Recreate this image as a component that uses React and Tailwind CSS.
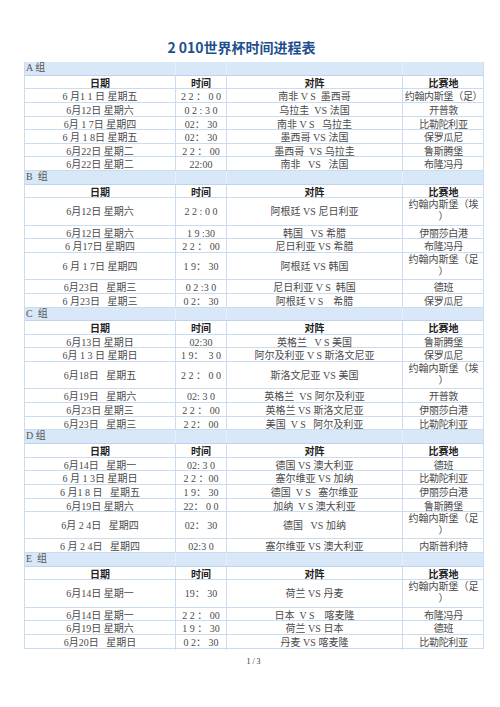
const groups = [
  {
    name: "A 组",
    rows: [
      ["6 月1 1 日 星期五", "2 2 ： 0 0", "南非 V S  墨西哥", "约翰内斯堡（足）"],
      ["6月12日 星期六", "0 2 : 3 0", "乌拉圭  VS 法国", "开普敦"],
      ["6月 1 7日 星期四", "02： 30", "南非 V S   乌拉圭", "比勒陀利亚"],
      ["6 月 1 8日 星期五", "02： 30", "墨西哥 VS 法国", "保罗瓜尼"],
      ["6月22日 星期二", "2 2 ： 00", "墨西哥  VS 乌拉圭", "鲁斯腾堡"],
      ["6月22日 星期二", "22:00", "南非   VS   法国", "布隆冯丹"],
    ],
  },
  {
    name: "B  组",
    rows: [
      ["6月12日 星期六", "2 2 : 0 0", "阿根廷 VS 尼日利亚", "约翰内斯堡（埃", true],
      ["6月12日 星期六", "1 9 :30", "韩国   VS 希腊", "伊丽莎白港"],
      ["6 月17日 星期四", "2 2 ： 00", "尼日利亚 VS 希腊", "布隆冯丹"],
      ["6 月 1 7日 星期四", "1 9： 30", "阿根廷 VS 韩国", "约翰内斯堡（足", true],
      ["6月23日   星期三", "0 2 :3 0", "尼日利亚 V S  韩国", "德班"],
      ["6 月23日   星期三", "0 2： 30", "阿根廷 V S    希腊", "保罗瓜尼"],
    ],
  },
  {
    name: "C  组",
    rows: [
      ["6月13日 星期日", "02:30", "英格兰   V S 美国", "鲁斯腾堡"],
      ["6月 1 3 日 星期日", "1 9：  3 0", "阿尔及利亚 V S 斯洛文尼亚", "保罗瓜尼"],
      ["6月18日   星期五", "2 2 ： 0 0", "斯洛文尼亚 VS 美国", "约翰内斯堡（埃", true],
      ["6月19日   星期六", "02: 3 0", "英格兰  VS 阿尔及利亚", "开普敦"],
      ["6月23日 星期三", "2 2 ： 00", "英格兰 VS 斯洛文尼亚", "伊丽莎白港"],
      ["6月23日   星期三", "2 2： 00", "美国  V S   阿尔及利亚", "比勒陀利亚"],
    ],
  },
  {
    name: "D 组",
    rows: [
      ["6月14日   星期一", "02: 3 0", "德国 VS 澳大利亚", "德班"],
      ["6 月 1 3日 星期日", "2 2 ：00", "塞尔维亚 VS 加纳", "比勒陀利亚"],
      ["6 月1 8 日   星期五", "1 9： 30", "德国  V S   塞尔维亚", "伊丽莎白港"],
      ["6月19日 星期六", "22： 0 0", "加纳  V S 澳大利亚", "鲁斯腾堡"],
      ["6月 2 4日   星期四", "02： 30", "德国   VS 加纳", "约翰内斯堡（足", true],
      ["6 月 2 4日   星期四", "02:3 0", "塞尔维亚 VS 澳大利亚", "内斯普利特"],
    ],
  },
  {
    name: "E  组",
    rows: [
      ["6月14日 星期一", "19： 30", "荷兰 VS 丹麦", "约翰内斯堡（足", true],
      ["6月14日 星期一", "2 2 ： 00", "日本  V S    喀麦隆", "布隆冯丹"],
      ["6月19日 星期六", "1 9 ： 30", "荷兰 VS 日本", "德班"],
      ["6月20日   星期日", "0 2： 30", "丹麦 VS 喀麦隆", "比勒陀利亚"],
    ],
  },
];

const cols = "grid grid-cols-[151px_51px_176px_81px]";
const serif = "font-['Liberation_Serif','Noto_Sans_CJK_SC',serif]";
const sans = "font-['Noto_Sans_CJK_SC','Liberation_Sans',sans-serif]";

function Band({ name }) {
  return (
    <div className={`${cols} h-[13.65px] bg-[#d8e8f8] border-b border-[#bcd4ee]`}>
      <div className={`${serif} text-[10px] leading-[11px] text-[#555] pl-[1px] whitespace-pre border-r border-[#e6f0fa]`}>
        {name}
      </div>
      <div className="border-r border-[#e6f0fa]" />
      <div className="border-r border-[#e6f0fa]" />
      <div />
    </div>
  );
}

function Header() {
  const heads = ["日期", "时间", "对阵", "比赛地"];
  return (
    <div className={`${cols} h-[13.65px] border-b border-[#c9dcf0]`}>
      {heads.map((h, i) => (
        <div
          key={h}
          className={`${sans} font-bold text-[10px] leading-[13px] text-[#222] text-center ${i < 3 ? "border-r border-[#c9dcf0]" : ""}`}
        >
          {h}
        </div>
      ))}
    </div>
  );
}

function Row({ row }) {
  const [date, time, match, venue, tall] = row;
  const cell = `${serif} text-[10px] text-[#4a4a4a] whitespace-pre flex items-center justify-center`;
  return (
    <div className={`${cols} ${tall ? "h-[27.3px]" : "h-[13.65px]"} border-b border-[#c9dcf0]`}>
      <div className={`${cell} border-r border-[#c9dcf0]`}>{date}</div>
      <div className={`${cell} border-r border-[#c9dcf0]`}>{time}</div>
      <div className={`${cell} border-r border-[#c9dcf0]`}>{match}</div>
      {tall ? (
        <div className={`${serif} text-[10px] leading-[12px] text-[#4a4a4a] text-center pt-[1px]`}>
          <div className="whitespace-nowrap">{venue}</div>
          <div>）</div>
        </div>
      ) : (
        <div className={`${cell} tracking-[-0.3px]`}>{venue}</div>
      )}
    </div>
  );
}

export default function App() {
  return (
    <div className="w-[500px] h-[707px] bg-white overflow-hidden">
      <div className="h-[62px] flex items-end justify-center pr-[17px] pb-[6px]">
        <h1 className={`${sans} text-[14px] leading-[18px] font-semibold text-[#1f4f8f]`}>
          2 010世界杯时间进程表
        </h1>
      </div>
      <div className="ml-[24px] w-[460px] border-l border-r border-[#c9dcf0]">
        {groups.map((g) => (
          <div key={g.name}>
            <Band name={g.name} />
            <Header />
            {g.rows.map((r, i) => (
              <Row key={i} row={r} />
            ))}
          </div>
        ))}
      </div>
      <div className={`${serif} text-[8px] text-[#333] text-center pl-[7px] mt-[7px]`}>1 / 3</div>
    </div>
  );
}
